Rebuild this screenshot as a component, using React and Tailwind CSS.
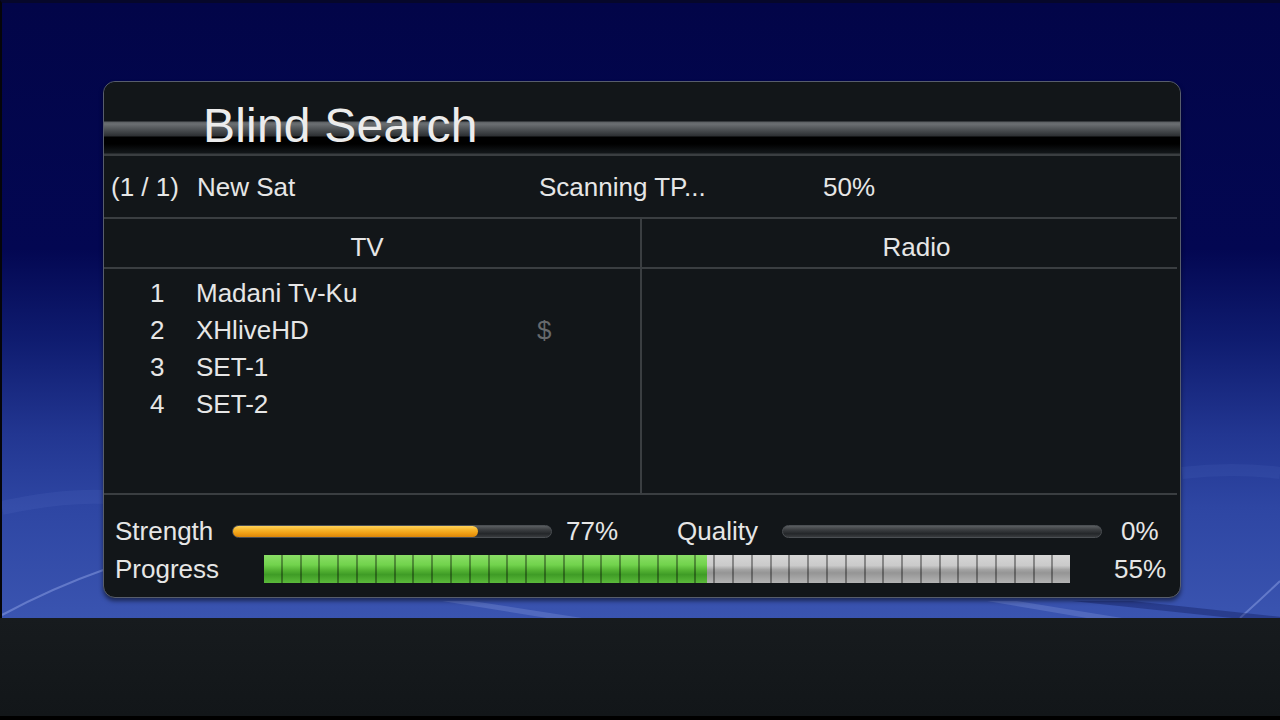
const channels = [
  { no: 1, name: "Madani Tv-Ku", scrambled: false },
  { no: 2, name: "XHliveHD", scrambled: true },
  { no: 3, name: "SET-1", scrambled: false },
  { no: 4, name: "SET-2", scrambled: false },
];

const SEGMENTS = 43;

function PillBar({ value }) {
  return (
    <div className="relative h-[13px] w-[320px] rounded-full border border-[#4b4f53] bg-[linear-gradient(to_bottom,#5a5e61_0%,#3a3d40_35%,#24272a_70%,#383b3e_100%)]">
      {value > 0 && (
        <div
          className="absolute left-0 top-0 h-full rounded-full bg-[linear-gradient(to_bottom,#ffd25a_0%,#f7b52a_35%,#ee9c12_70%,#d9850a_100%)]"
          style={{ width: `${value}%` }}
        />
      )}
    </div>
  );
}

function SegmentBar({ value }) {
  return (
    <div className="relative h-[28px] w-[806px] bg-[linear-gradient(to_bottom,#d6d6d6_0%,#cacaca_38%,#a4a4a4_52%,#959595_64%,#b4b4b4_100%)]">
      <div
        className="absolute left-0 top-0 h-full bg-[linear-gradient(to_bottom,#8ade66_0%,#72d34d_35%,#53b233_55%,#3f9c26_70%,#5bba3b_100%)]"
        style={{ width: `${value}%` }}
      />
      {/* cell dividers */}
      <div className="absolute inset-0 flex">
        {Array.from({ length: SEGMENTS }).map((_, i) => (
          <div key={i} className="h-full flex-1 border-l-2 border-black/35 first:border-l-0" />
        ))}
      </div>
    </div>
  );
}

export default function App() {
  return (
    <div className="flex h-[720px] w-[1280px] flex-col overflow-hidden bg-black font-['Liberation_Sans',Arial,sans-serif] text-[#e6e6e6]">
      {/* blue backdrop */}
      <div className="relative h-[618px] border-l-2 border-t-[3px] border-l-[#050509] border-t-[#06072a] bg-[linear-gradient(to_bottom,#020548_0%,#030752_40%,#0f1c70_55%,#223691_70%,#2e46a3_82%,#3a54b0_100%)] pl-[101px] pt-[78px]">
        <svg className="absolute inset-0" width="1278" height="615" viewBox="0 0 1278 615">
          <path d="M0 612 Q 50 585 104 566" stroke="#8ea2e6" strokeOpacity="0.5" strokeWidth="2" fill="none" />
          <path d="M1238 615 Q 1260 595 1278 578" stroke="#8ea2e6" strokeOpacity="0.5" strokeWidth="2" fill="none" />
          <path d="M0 505 Q 60 492 104 494" stroke="#6f86d4" strokeOpacity="0.12" strokeWidth="14" fill="none" />
          <path d="M1180 470 Q 1230 464 1278 470" stroke="#6f86d4" strokeOpacity="0.1" strokeWidth="12" fill="none" />
          <polygon points="440,598 470,598 580,615 545,615" fill="#7e92d8" fillOpacity="0.35" />
          <polygon points="985,598 1015,598 1120,615 1085,615" fill="#7e92d8" fillOpacity="0.35" />
          <polygon points="1070,598 1130,598 1290,615 1230,615" fill="#0c1550" fillOpacity="0.35" />
        </svg>

        {/* main panel */}
        <div className="relative flex h-[517px] w-[1078px] flex-col rounded-[12px] border border-[#575d6c] bg-[#121619] shadow-[0_3px_4px_rgba(0,0,0,0.5)]">
          {/* title bar */}
          <div className="h-[74px] rounded-t-[12px] bg-[linear-gradient(to_bottom,#121619_0px,#121619_39px,#5c6063_40px,#6b6f72_42px,#4a4e51_48px,#2c2f32_54px,#000_55px,#000_62px,#0d1012_68px,#121619_71px,#3a3e41_72px,#3a3e41_74px)] pl-[99px] pt-[20px]">
            <h1 className="text-[48px] leading-none tracking-[0.2px] text-[#ececec]">Blind Search</h1>
          </div>

          <div className="mr-[3px] flex flex-1 flex-col">
            {/* scan status */}
            <div className="flex h-[63px] items-center border-b-2 border-[#3a3e41] pl-[7px] pt-[2px] text-[26px]">
              <span className="w-[86px]">(1 / 1)</span>
              <span className="w-[342px]">New Sat</span>
              <span className="w-[284px]">Scanning TP...</span>
              <span>50%</span>
            </div>

            {/* column headers */}
            <div className="flex h-[50px] border-b-2 border-[#3a3e41] text-[26px]">
              <div className="flex w-[538px] items-center justify-center border-r-2 border-[#3a3e41] pr-[10px] pt-[9px]">TV</div>
              <div className="flex flex-1 items-center justify-center pl-[14px] pt-[9px]">Radio</div>
            </div>

            {/* channel lists */}
            <div className="flex h-[226px] border-b-2 border-[#3a3e41] text-[26px]">
              <div className="w-[538px] border-r-2 border-[#3a3e41] pl-[46px] pt-[6px]">
                {channels.map((ch) => (
                  <div key={ch.no} className="flex h-[37px] items-center">
                    <span className="w-[46px]">{ch.no}</span>
                    <span className="w-[341px]">{ch.name}</span>
                    {ch.scrambled && <span className="text-[#66696c]">$</span>}
                  </div>
                ))}
              </div>
              <div className="flex-1" />
            </div>

            {/* signal + progress */}
            <div className="flex flex-col gap-[8px] pl-[11px] pt-[21px] text-[26px]">
              <div className="flex h-[30px] items-center">
                <span className="w-[117px]">Strength</span>
                <PillBar value={77} />
                <span className="ml-[14px] w-[111px]">77%</span>
                <span className="w-[105px]">Quality</span>
                <PillBar value={0} />
                <span className="ml-[19px]">0%</span>
              </div>
              <div className="flex h-[30px] items-center">
                <span className="w-[149px]">Progress</span>
                <SegmentBar value={55} />
                <span className="ml-[44px]">55%</span>
              </div>
            </div>
          </div>
        </div>
      </div>

      {/* dark lower band */}
      <div className="flex-1 border-b-4 border-black bg-[linear-gradient(to_bottom,#171b1e_0%,#14181b_60%,#121619_100%)]" />
    </div>
  );
}
